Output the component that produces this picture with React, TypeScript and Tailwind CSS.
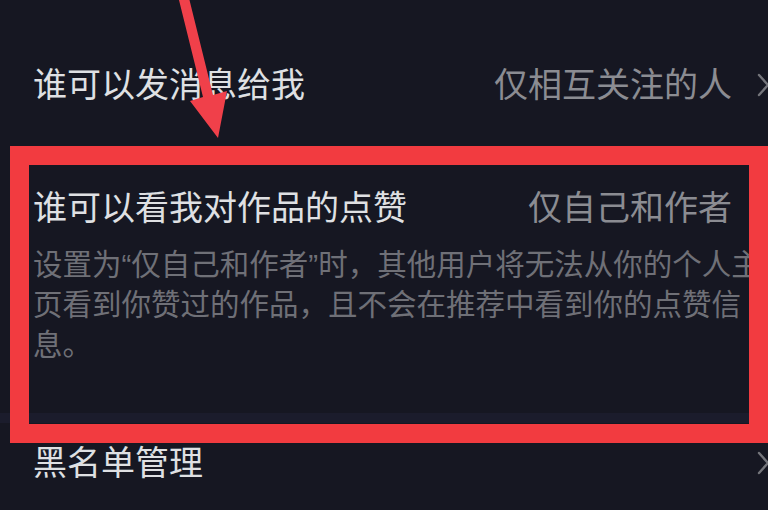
import React from 'react'

const FONT = '"Liberation Sans","Noto Sans CJK SC",sans-serif'

function Chevron() {
  return (
    <svg width="14" height="26" viewBox="0 0 14 26" className="shrink-0 -mr-[2px]">
      <path d="M3 3 L12 13 L3 23" fill="none" stroke="#74757b" strokeWidth="2.4" strokeLinecap="round" strokeLinejoin="round" />
    </svg>
  )
}

function Row({ title, value }: { title: string; value?: string }) {
  return (
    <div className="flex items-center h-[48px] pl-[33px]">
      <span className="flex-1 text-[34px] leading-[48px] text-[#dfe0e3] whitespace-nowrap">{title}</span>
      {value && <span className="text-[34px] leading-[48px] text-[#8b8c92] whitespace-nowrap mr-[24px]">{value}</span>}
      <Chevron />
    </div>
  )
}

export default function App() {
  return (
    <div className="relative w-[768px] h-[510px] overflow-hidden bg-[#161722]" style={{ fontFamily: FONT }}>
      <div className="pt-[61px]">
        <Row title="谁可以发消息给我" value="仅相互关注的人" />

        {/* liked-works visibility */}
        <div className="mt-[75px]">
          <Row title="谁可以看我对作品的点赞" value="仅自己和作者" />
          <div className="mt-[13px] pl-[33px] text-[29.5px] leading-[40px] text-[#6f7077] whitespace-nowrap">
            <div>设置为“仅自己和作者”时，其他用户将无法从你的个人主</div>
            <div>页看到你赞过的作品，且不会在推荐中看到你的点赞信</div>
            <div>息。</div>
          </div>
          <div className="mt-[48px] h-[10px] bg-[#1b1c2c]" />
        </div>

        <div className="mt-[16px]">
          <Row title="黑名单管理" />
        </div>
      </div>

      {/* annotation: red box */}
      <div className="absolute left-[10px] top-[146px] w-[758px] h-[297px] border-[19px] border-[#f23b40] pointer-events-none" />

      {/* annotation: arrow */}
      <svg className="absolute left-0 top-0 pointer-events-none" width="768" height="510" viewBox="0 0 768 510">
        <polygon
          points="178,-4 188,-6 213,95 227,91 218,138 190,101 203,97"
          fill="#f0404a"
        />
      </svg>
    </div>
  )
}
